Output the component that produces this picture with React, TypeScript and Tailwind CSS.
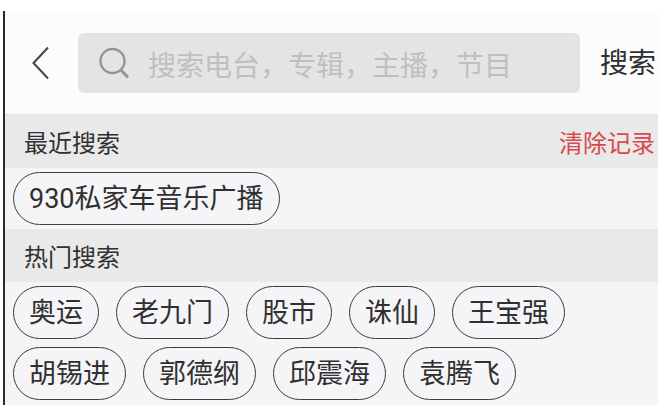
import React, { useState } from "react";

const recentSearches = ["930私家车音乐广播"];

const hotSearches = [
  "奥运",
  "老九门",
  "股市",
  "诛仙",
  "王宝强",
  "胡锡进",
  "郭德纲",
  "邱震海",
  "袁腾飞",
];

interface SectionHeaderProps {
  title: string;
  children?: React.ReactNode;
}

function SectionHeader({ title, children }: SectionHeaderProps) {
  return (
    <div className="flex items-center justify-between bg-[#e9e9ea] pl-[19px] pr-[3px] pt-[11px] pb-[6px] text-2xl leading-9">
      <h2>{title}</h2>
      {children}
    </div>
  );
}

interface TagListProps {
  tags: string[];
  onSelect: (tag: string) => void;
}

function TagList({ tags, onSelect }: TagListProps) {
  return (
    <div className="flex flex-wrap gap-x-[17px] gap-y-2 px-2 py-1">
      {tags.map((tag) => (
        <button
          key={tag}
          type="button"
          onClick={() => onSelect(tag)}
          className="rounded-full border border-[#3c3c3e] px-[15px] pt-2 pb-[7px] text-[27px] leading-9"
        >
          {tag}
        </button>
      ))}
    </div>
  );
}

export default function App() {
  const [query, setQuery] = useState("");
  const [recent, setRecent] = useState(recentSearches);

  return (
    <div className="min-h-screen bg-white pl-[3px] pt-[11px] font-['Roboto','Noto_Sans_CJK_SC',sans-serif] text-[#303032]">
      <div className="min-h-[calc(100vh-11px)] border-l-2 border-[#2a2a2a] bg-[#f5f5f7]">
        <form
          onSubmit={(e) => e.preventDefault()}
          className="flex items-center border-b border-[#e3e3e3] bg-[#fcfcfc] pt-[22px] pb-[21px] pr-[2px]"
        >
          <button type="button" aria-label="返回" className="w-[73px] shrink-0 pl-[26px]">
            <svg width="20" height="36" viewBox="0 0 20 36" fill="none" stroke="#444" strokeWidth="2">
              <path d="M17 2.5 L2.5 18 L17 33.5" />
            </svg>
          </button>
          <label className="flex h-[60px] min-w-0 flex-1 items-center rounded-md bg-[#e4e4e5] pl-5">
            <svg
              width="32"
              height="34"
              viewBox="0 0 32 34"
              fill="none"
              stroke="#949494"
              strokeWidth="2.4"
              className="shrink-0"
            >
              <circle cx="14.5" cy="15" r="12" />
              <path d="M22.5 23.5 L30 31.5" strokeWidth="3" />
            </svg>
            <input
              type="text"
              aria-label="搜索"
              value={query}
              onChange={(e) => setQuery(e.target.value)}
              placeholder="搜索电台，专辑，主播，节目"
              className="ml-[18px] min-w-0 flex-1 bg-transparent pt-2 text-[28px] leading-10 outline-none placeholder:text-[#bfbfc1]"
            />
          </label>
          <button type="submit" className="ml-5 shrink-0 pt-[2px] text-[28px] leading-10">
            搜索
          </button>
        </form>

        <SectionHeader title="最近搜索">
          <button type="button" onClick={() => setRecent([])} className="text-[#d9484a]">
            清除记录
          </button>
        </SectionHeader>
        <TagList tags={recent} onSelect={setQuery} />

        <SectionHeader title="热门搜索" />
        <TagList tags={hotSearches} onSelect={setQuery} />
      </div>
    </div>
  );
}
